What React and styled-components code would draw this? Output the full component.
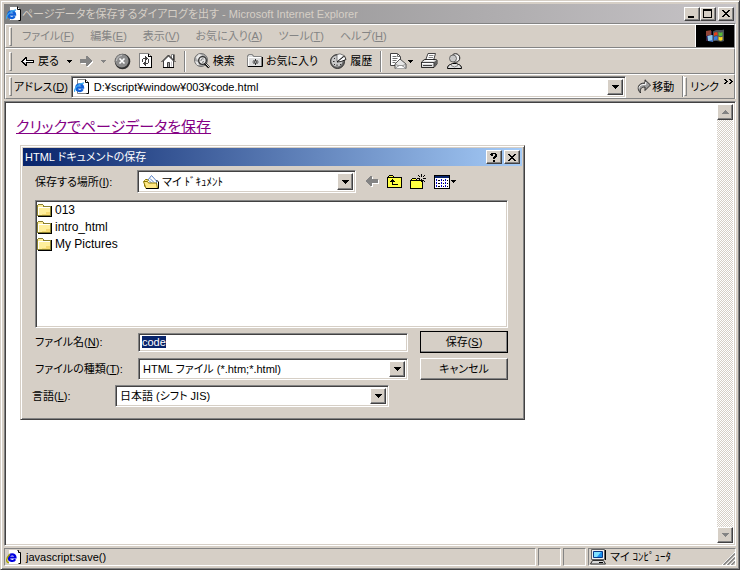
import React, { useEffect, useRef } from "react";
import styled, { createGlobalStyle, css } from "styled-components";

const FACE = "#d6cfc6";
const SHADOW = "#848484";
const DARK = "#424142";

const GlobalStyle = createGlobalStyle`
  * {
    box-sizing: border-box;
  }

  body {
    margin: 0;
    background: ${FACE};
  }

  body,
  button,
  input,
  select {
    color: #000;
    font-family: "Liberation Sans", "Noto Sans CJK JP", sans-serif;
    font-size: 11px;
    line-height: 16px;
    font-feature-settings: "palt";
  }

  button,
  input,
  select {
    margin: 0;
    padding: 0;
    border: 0;
    border-radius: 0;
    outline: 0;
  }

  svg {
    display: block;
    flex: none;
  }
`;

const raised = css`
  background: ${FACE};
  border: 1px solid;
  border-color: #fff ${DARK} ${DARK} #fff;
  box-shadow: inset -1px -1px ${SHADOW};
`;

const sunken = css`
  background: #fff;
  border: 1px solid;
  border-color: ${SHADOW} #fff #fff ${SHADOW};
  box-shadow: inset 1px 1px ${DARK}, inset -1px -1px ${FACE};
`;

const Window = styled.div`
  display: flex;
  flex-direction: column;
  min-height: 100vh;
  padding: 3px;
  background: ${FACE};
  border: 1px solid;
  border-color: ${FACE} ${DARK} ${DARK} ${FACE};
  box-shadow: inset 1px 1px #fff, inset -1px -1px ${SHADOW};
`;

const TitleBar = styled.header`
  display: flex;
  align-items: center;
  height: ${(p) => (p.$active ? 18 : 19)}px;
  padding: 0 2px;
  color: ${(p) => (p.$active ? "#fff" : FACE)};
  background: ${(p) =>
    p.$active
      ? "linear-gradient(90deg, #08246b, #a5cbf7)"
      : "linear-gradient(90deg, #808080, #c6c3c6)"};
`;

const Title = styled.h1`
  flex: 1;
  margin: 0;
  font-size: 11px;
  font-weight: normal;
  white-space: nowrap;
  overflow: hidden;
`;

const CaptionButton = styled.button`
  ${raised}
  display: flex;
  align-items: center;
  justify-content: center;
  width: 16px;
  height: 14px;
  margin-left: ${(p) => (p.$gap ? 2 : 0)}px;
`;

const Rebar = styled.div`
  border-left: 1px solid ${SHADOW};
  border-top: 1px solid ${SHADOW};
  border-right: 1px solid #fff;
`;

const Band = styled.div`
  display: flex;
  align-items: center;
  height: ${(p) => p.$height}px;
  padding-left: 3px;
  border: 1px solid;
  border-color: #fff ${SHADOW} ${SHADOW} #fff;
`;

const Grip = styled.span`
  flex: none;
  width: 3px;
  height: 19px;
  border: 1px solid;
  border-color: #fff ${SHADOW} ${SHADOW} #fff;
`;

const Menu = styled.nav`
  display: flex;
  flex: 1;
  gap: 16px;
  padding-left: 10px;
`;

const MenuItem = styled.button`
  color: ${SHADOW};
  background: none;
  white-space: nowrap;
`;

const Throbber = styled.div`
  display: flex;
  align-items: center;
  justify-content: center;
  align-self: stretch;
  width: 39px;
  background: #000;
  border-left: 1px solid #fff;
`;

const Tools = styled.div`
  display: flex;
  align-items: center;
  gap: 8px;
  padding-left: 9px;
`;

const ToolButton = styled.button`
  display: flex;
  align-items: center;
  gap: ${(p) => p.$gap || 3}px;
  padding-right: ${(p) => (p.$labelled ? 4 : 0)}px;
  background: none;
  white-space: nowrap;
`;

const Separator = styled.span`
  width: 2px;
  height: 21px;
  border-left: 1px solid ${SHADOW};
  border-right: 1px solid #fff;
`;

const Field = styled.div`
  ${sunken}
  display: flex;
  align-items: center;
  flex: ${(p) => (p.$width ? "none" : 1)};
  width: ${(p) => (p.$width ? p.$width + "px" : "auto")};
  height: ${(p) => p.$height || 22}px;
  padding: ${(p) => (p.$icon ? "2px 2px 2px 5px" : "2px")};
  min-width: 0;
`;

const TextInput = styled.input`
  flex: 1;
  min-width: 0;
  height: 100%;
  padding-left: ${(p) => p.$indent || 0}px;
  background: transparent;

  &::selection {
    color: #fff;
    background: #08246b;
  }
`;

const Picker = styled.select`
  appearance: none;
  flex: 1;
  min-width: 0;
  height: 100%;
  padding-left: 2px;
  background: transparent;
`;

const DropArrow = styled.span`
  ${raised}
  display: flex;
  align-items: center;
  justify-content: center;
  align-self: stretch;
  flex: none;
  width: 16px;
`;

const AddressLabel = styled.label`
  margin: 0 3px 0 2px;
  white-space: nowrap;
`;

const GoButton = styled(ToolButton)`
  gap: 1px;
  padding: 0 8px 0 11px;
`;

const Links = styled.button`
  display: flex;
  gap: 5px;
  padding: 0 1px 0 3px;
  background: none;
  white-space: nowrap;
`;

const Viewport = styled.main`
  ${sunken}
  display: flex;
  flex: 1;
  margin-top: 2px;
  padding: 2px;
`;

const Page = styled.div`
  position: relative;
  flex: 1;
  padding: 13px 9px;
`;

const PageLink = styled.a`
  color: #840084;
  font-size: 15px;
  line-height: 20px;
`;

const Scrollbar = styled.div`
  display: flex;
  flex-direction: column;
  justify-content: space-between;
  width: 16px;
  background: repeating-conic-gradient(#fff 0 25%, ${FACE} 0 50%) 0 0 / 2px 2px;
`;

const ScrollButton = styled.button`
  ${raised}
  display: flex;
  align-items: center;
  justify-content: center;
  height: 16px;
`;

const StatusBar = styled.footer`
  display: flex;
  gap: 2px;
  height: 18px;
  margin-top: 2px;
`;

const StatusPane = styled.div`
  display: flex;
  align-items: center;
  gap: 4px;
  flex: ${(p) => (p.$width ? "none" : 1)};
  width: ${(p) => (p.$width ? p.$width + "px" : "auto")};
  padding-left: 1px;
  border: 1px solid;
  border-color: ${SHADOW} #fff #fff ${SHADOW};
  white-space: nowrap;
`;

const Resize = styled.span`
  align-self: flex-end;
  margin-left: auto;
`;

const Dialog = styled.section`
  position: absolute;
  left: 13px;
  top: 41px;
  width: 505px;
  padding: 2px;
  background: ${FACE};
  border: 1px solid;
  border-color: ${FACE} ${DARK} ${DARK} ${FACE};
  box-shadow: inset 1px 1px #fff, inset -1px -1px ${SHADOW};
`;

const DialogBody = styled.form`
  padding: 4px 14px 10px 12px;
`;

const LookIn = styled.div`
  display: flex;
  align-items: center;
  height: 23px;
  margin-bottom: 7px;
`;

const LookInLabel = styled.label`
  width: 102px;
`;

const FolderTools = styled.div`
  display: flex;
  align-items: center;
  gap: 8px;
  padding-left: 10px;
`;

const FileList = styled.ul`
  ${sunken}
  height: 128px;
  margin: 0;
  padding: 0 1px;
  font-size: 12px;
  list-style: none;
`;

const FileItem = styled.li`
  display: flex;
  align-items: center;
  gap: 2px;
  height: 17px;
`;

const FormRows = styled.div`
  display: grid;
  grid-template-columns: 103px 270px 1fr;
  row-gap: 5px;
  align-items: center;
  padding-top: 3px;
`;

const PushButton = styled.button`
  ${raised}
  justify-self: end;
  width: 88px;
  height: 22px;
  outline: ${(p) => (p.$primary ? "1px solid #000" : "0")};
  outline-offset: -1px;
`;

const LanguageRow = styled.div`
  display: flex;
  align-items: center;
  margin: 5px 0 0 -3px;
`;

const LanguageLabel = styled.label`
  width: 83px;
`;

const Key = ({ k }) => (
  <>
    (<u>{k}</u>)
  </>
);

const Triangle = ({ color = "#000", up, small }) => (
  <svg width={small ? 5 : 7} height={small ? 3 : 4} viewBox={small ? "1 1 5 3" : "0 0 7 4"} shapeRendering="crispEdges">
    <path fill={color} d={up ? "M3 0h1v1h1v1h1v1h1v1H0V3h1V2h1V1h1z" : "M0 0h7v1H6v1H5v1H4v1H3V3H2V2H1V1H0z"} />
  </svg>
);

const PageIcon = () => (
  <svg width="16" height="16" viewBox="0 0 16 16">
    <path fill="#fff" stroke="#848484" d="M3.500 .5h8l3 3v11h-11z" />
    <path fill="none" stroke="#000" d="M11.500 .5v3h3v11h-2" />
    <path fill="none" stroke="#1060d8" strokeWidth="2.400" d="M2.500 8.500h6.500c0-4.300-6.600-4.200-6.600.2 0 3.800 5 4.200 6.300 1.600" />
    <path fill="none" stroke="#38a8f0" strokeWidth="1.200" d="M.8 12.800C-.5 10.500 4 4.500 10 3.800" />
  </svg>
);

const StatusPageIcon = () => (
  <svg width="16" height="16" viewBox="0 0 16 16">
    <path fill="#fff" d="M3 1h8l3 3v11H3z" />
    <path fill="none" stroke="#000" d="M11.500 1.500h1v2h2v11h-2" />
    <path fill="none" stroke="#0000e0" strokeWidth="2.200" d="M3 8.500h6.500c0-4.300-6.600-4.200-6.600.2 0 3.800 5 4.200 6.300 1.600" />
    <path fill="none" stroke="#a5a200" strokeWidth="1.300" d="M3 13.500C-.5 13.500 0 9 4 5" />
  </svg>
);

const BackIcon = () => (
  <svg width="13" height="9" viewBox="0 0 13 9" shapeRendering="crispEdges">
    <path fill="#000" d="M4 0h2v3h7v3H6v3H4V8H3V7H2V6H1V5H0V4h1V3h1V2h1V1h1z" />
    <path fill="#fff" d="M4 2h1v2h7v1H2V4h1V3h1z" />
    <path fill="#c6c3c6" d="M3 5h2v2H4V6H3z" />
  </svg>
);

const GreyArrow = ({ left }) => (
  <svg width="13" height="11" viewBox="0 0 13 11" shapeRendering="crispEdges">
    {left ? (
      <>
        <path fill="#fff" d="M5 1h2v3h6v4H7v3H5v-1H4V9H3V8H2V7H1V5h1V4h1V3h1V2h1z" />
        <path fill="#848484" d="M4 0h2v3h6v4H6v3H4V9H3V8H2V7H1V6H0V4h1V3h1V2h1V1h1z" />
      </>
    ) : (
      <>
        <path fill="#fff" d="M7 1h2v1h1v1h1v1h1v1h1v2h-1v1h-1v1h-1v1H9v1H7V8H1V4h6z" />
        <path fill="#848484" d="M6 0h2v1h1v1h1v1h1v1h1v2h-1v1h-1v1H9v1H8v1H6V7H0V3h6z" />
      </>
    )}
  </svg>
);

const StopIcon = () => (
  <svg width="17" height="17" viewBox="0 0 17 17">
    <circle cx="8.500" cy="8.500" r="7.800" fill="#303030" />
    <circle cx="7.800" cy="7.800" r="6.800" fill="#8c8c8c" />
    <path fill="none" stroke="#c8c8c8" d="M2.500 8a5.500 5.500 0 0 1 5.500-5.500" />
    <path stroke="#fff" strokeWidth="1.600" d="M5.500 5.500l5 5M10.500 5.500l-5 5" />
  </svg>
);

const RefreshIcon = () => (
  <svg width="14" height="16" viewBox="0 0 14 16" shapeRendering="crispEdges">
    <path fill="#fff" stroke="#848484" d="M.5 .5h9l3 3v11H.5z" />
    <path fill="none" stroke="#000" d="M9.500 .5v3h3M12.500 3.500v11.500M1 14.500h12" />
    <path fill="#424142" d="M6 3h1v1h1v1h1v1H8v1H7v1H6V6H4v3H3V6h1V5h2zM9 6h1v4H9v1H7v2H6v-1H5v-1H4v-1h1V9h1V8h1v2h2z" />
  </svg>
);

const HomeIcon = () => (
  <svg width="15" height="16" viewBox="0 0 15 16">
    <path fill="#fff" stroke="#848484" d="M10.500 5V1.500h2v5.500" />
    <path fill="#fff" stroke="#424142" d="M2.500 8v6.500h10V8L7.500 3z" />
    <path fill="none" stroke="#202020" d="M.5 9L7.500 2l7 7" />
    <path fill="#a8a8a8" stroke="#424142" d="M6.500 9.500h2v5h-2z" />
    <path stroke="#c6c3c6" d="M10.500 8.500v5" />
    <path fill="none" stroke="#000" d="M13 1.500V7M2 14.500h11" />
  </svg>
);

const SearchIcon = () => (
  <svg width="16" height="16" viewBox="0 0 16 16">
    <circle cx="7" cy="7" r="6.500" fill="#a8a8a8" stroke="#707070" />
    <path fill="#e8e8e8" d="M2 4l3-3 3 1-2 3-3 2zM1 8l3 1 1 3-2 0z" />
    <circle cx="8.500" cy="7.500" r="3.800" fill="#e4e4e4" stroke="#303030" strokeWidth="1.300" />
    <path fill="none" stroke="#707070" d="M7 8a1.800 1.800 0 0 1 2.500-2M8 9.500l2-1" />
    <path stroke="#000" strokeWidth="2.400" d="M11 10.500l4 4" />
    <path stroke="#d8d8d8" d="M11.500 10.500l3.500 3.500" />
  </svg>
);

const FavoritesIcon = () => (
  <svg width="16" height="14" viewBox="0 0 16 14">
    <path fill="#dedede" stroke="#848484" d="M.5 3.500v-2h1v-1h4v1h1v1h8v10H.5z" />
    <path fill="none" stroke="#000" d="M1 12.500h14.500V3" />
    <path fill="none" stroke="#fff" d="M1.500 12V3.500H14" />
    <path stroke="#303030" d="M8.500 5v6M5.500 8h6M6.500 6l4 4M10.500 6l-4 4" />
    <path fill="#fff" d="M8 7.500h1v1H8z" />
  </svg>
);

const HistoryIcon = () => (
  <svg width="17" height="16" viewBox="0 0 17 16">
    <circle cx="7.500" cy="8.500" r="7" fill="#686868" stroke="#303030" />
    <circle cx="7" cy="8" r="5.600" fill="#c8c8c8" />
    <path fill="#f8f8f8" stroke="#606060" strokeWidth=".8" d="M7 8.500V1.500l3-.7 4 1.700-3 3z" />
    <path fill="#fff" stroke="#000" strokeWidth=".8" d="M7 9l7.500-6 1.500 3.500-5 2z" />
    <path stroke="#303030" d="M3 8.500h1.500M7 11.500v1.500M4 5l1 1M10 11l1 1M4 12l1-1" />
  </svg>
);

const MailIcon = () => (
  <svg width="17" height="17" viewBox="0 0 17 17">
    <path fill="#fff" stroke="#424142" d="M.5 .5h7l3 3v9H.5z" />
    <path fill="none" stroke="#707070" d="M2.500 3.500h4M2.500 5.500h5M2.500 7.500h4M2.500 9.500h3M7.500 .5v3h3" />
    <path fill="#e6e6e6" stroke="#303030" strokeWidth=".8" d="M5 11l5-5 6 5v4.500H5z" />
    <path fill="#fff" stroke="#808080" strokeWidth=".8" d="M5 15.500l4-3h3l4 3" />
    <path fill="none" stroke="#808080" strokeWidth=".8" d="M5 11l4 2M16 11l-4 2" />
  </svg>
);

const PrintIcon = () => (
  <svg width="17" height="16" viewBox="0 0 17 16">
    <path fill="#fff" stroke="#424142" d="M4.500 7.500L7 .5h7.500l-2 7z" />
    <path stroke="#848484" d="M8 2.500h4.500M7.500 4.500h4.500" />
    <path fill="#dedede" stroke="#000" strokeWidth=".8" d="M.5 9l3-2.500h10.500l2 .5v4L13 14.500H.5z" />
    <path fill="#606060" d="M13 9l3-2v4l-3 3z" />
    <path fill="none" stroke="#424142" d="M1 9.500h12v4.500M2 12.500h9" />
    <path stroke="#fff" d="M1 10.500h11" />
    <path fill="#fff" d="M5 7h8l-1 1H4z" />
  </svg>
);

const MessengerIcon = () => (
  <svg width="17" height="17" viewBox="0 0 17 17">
    <circle cx="9.500" cy="5" r="4.300" fill="#efefef" stroke="#202020" />
    <circle cx="7" cy="5.500" r="3.500" fill="#c8c8c8" stroke="#505050" strokeWidth=".8" />
    <path fill="#e0e0e0" stroke="#000" d="M1.500 15.500c0-2 .8-3.500 3-4l2-1h4l2 1c2.200.5 3 2 3 4z" />
    <path fill="none" stroke="#848484" d="M5 12.500l3.500 1.500 3.500-1.500" />
  </svg>
);

const GoIcon = () => (
  <svg width="14" height="15" viewBox="0 0 14 15">
    <path fill="#9c9c9c" stroke="#202020" strokeWidth=".9" d="M3.500 14C-.5 10 .5 4 8 4V.8L13.500 6 8 11.500V8C4 8 3 10 3.500 14z" />
    <path fill="none" stroke="#fff" d="M2 9.500C2 6.500 4.500 5.300 8.700 5.500V3" />
  </svg>
);

const FlagLogo = () => (
  <svg width="20" height="17" viewBox="0 0 20 17">
    <path fill="#402048" d="M1 3h6v10H1z" opacity=".8" />
    <path fill="#b85838" d="M1 3l5-1v5l-5 1z" opacity=".7" />
    <path fill="#4878c8" d="M2 8l6-1v7l-5-1z" />
    <path fill="#90c8e8" d="M3 8l4-1v5l-4 1z" />
    <path fill="#485058" d="M8 3.500C12 .5 14 3 19 1.500V13c-4 2-7-1-11 .5z" />
    <path fill="#e84018" d="M9 5C10 4 11 4 12.500 4.500v3C11 7 10 7 9 8z" />
    <path fill="#58b838" d="M13.500 4c2 1 2.500 1 4 0v3.500c-1.500 1-2 1-4 0z" />
    <path fill="#3878e0" d="M9 9c1-1 2-1 3.500-.5V12C11 11.500 10 12 9 12.500z" />
    <path fill="#f8d820" d="M13.500 8.500c2 1 2.500 1 4 0V12c-1.500 1-2 1-4 0z" />
  </svg>
);

const DocumentsIcon = () => (
  <svg width="17" height="16" viewBox="0 0 17 16">
    <path fill="#fff" stroke="#5a82c8" d="M3.500 8l5-6.500 5 5.500v4h-10z" />
    <path stroke="#5a82c8" d="M7 4.500l4 4M6 6.500l3 3" />
    <path fill="#ffe784" stroke="#8c7900" d="M1.500 12.500v-6l1-1h2l1 1.500" />
    <path fill="#ffe784" stroke="#8c7900" d="M.5 7.500h4l1 1.500h8l1 5.500H3z" />
    <path fill="none" stroke="#000" d="M3 14.500h12.500V8l-2-2" />
  </svg>
);

const FolderIcon = () => (
  <svg width="16" height="14" viewBox="0 0 16 14" shapeRendering="crispEdges">
    <path fill="#ffef9c" stroke="#8c8230" d="M.5 12.500v-10l1-1h4l1 1.500h7v9.500z" />
    <path fill="#fff" d="M1 4h12v1H2v7H1z" />
    <path fill="#f7db73" d="M9 9h4v3H5v-1h4z" />
    <path fill="none" stroke="#000" d="M1 13.500h13.500V3" />
  </svg>
);

const UpIcon = () => (
  <svg width="15" height="13" viewBox="0 0 15 13" shapeRendering="crispEdges">
    <path fill="#000" d="M2 0h4v1h1v1h8v11H0V2h1V1h1z" />
    <path fill="#ffff42" d="M2 1h4v1H2zM1 3h13v9H1z" />
    <path fill="#000" d="M5 4h1v1h1v1h1v1H6v2h5v1H5V7H3V6h1V5h1z" />
  </svg>
);

const NewFolderIcon = () => (
  <svg width="16" height="15" viewBox="0 0 16 15" shapeRendering="crispEdges">
    <path fill="#000" d="M2 4h4v1h1v1h6v9H0V6h1V5h1z" />
    <path fill="#ffff42" d="M2 5h4v1H2zM1 7h11v7H1z" />
    <path fill="#000" d="M11 0h1v3h-1zM11 5h1v3h-1zM7 4h3v1H7zM13 4h3v1h-3zM8 1h1v1H8zM9 2h1v1H9zM14 1h1v1h-1zM13 2h1v1h-1zM13 6h1v1h-1zM14 7h1v1h-1zM9 5h1v1H9z" />
  </svg>
);

const ViewIcon = () => (
  <svg width="16" height="14" viewBox="0 0 16 14" shapeRendering="crispEdges">
    <path fill="#000" d="M0 0h16v14H0z" />
    <path fill="#fff" d="M1 3h14v10H1z" />
    <path fill="#08246b" d="M1 1h14v2H1z" />
    <path fill="#0000c6" d="M2 4h1v2H2zM7 4h1v2H7zM11 4h1v2h-1zM2 7h1v2H2zM7 7h1v2H7zM11 7h1v2h-1zM2 10h1v2H2zM7 10h1v2H7zM11 10h1v2h-1z" />
    <path fill="#000" d="M4 5h2v1H4zM9 5h1v1H9zM13 5h1v1h-1zM4 8h2v1H4zM9 8h1v1H9zM13 8h1v1h-1zM4 11h2v1H4zM9 11h1v1H9zM13 11h1v1h-1z" />
  </svg>
);

const ComputerIcon = () => (
  <svg width="16" height="16" viewBox="0 0 16 16">
    <path fill="#f0f0f0" stroke="#606060" d="M1.500 .5h13v10h-13z" />
    <path fill="#1890f0" stroke="#083888" d="M3.500 2.500h9v6h-9z" />
    <path fill="#80e0ff" d="M4 3h7L7 8H4z" />
    <path fill="#d8d8d8" stroke="#303030" d="M2.500 11.500h11l2 3.500H.5z" />
    <path stroke="#000" d="M9 13.500h4M15.500 1v10" />
  </svg>
);

const CaptionGlyph = ({ d }) => (
  <svg width="10" height="9" viewBox="0 0 10 9" shapeRendering="crispEdges">
    <path d={d} />
  </svg>
);

const CLOSE = "M1 1h2v1h1v1h2V2h1V1h2v1H8v1H7v1H6v1h1v1h1v1h1v1H7V7H6V6H4v1H3v1H1V7h1V6h1V5h1V4H3V3H2V2H1z";
const MINIMIZE = "M1 7h6v2H1z";
const MAXIMIZE = "M0 0h9v9H0zM1 2v6h7V2z";
const HELP = "M2 0h5v1h1v3H7v1H6v1H4V4h1V3h1V1H4v2H2V2H1V1h1zM4 7h2v2H4z";

const folders = ["013", "intro_html", "My Pictures"];

const SaveDialog = () => {
  const nameRef = useRef(null);

  useEffect(() => {
    nameRef.current.focus();
    nameRef.current.select();
  }, []);

  return (
    <Dialog role="dialog" aria-label="HTML ドキュメントの保存">
      <TitleBar $active>
        <Title as="h2">HTML ドキュメントの保存</Title>
        <CaptionButton aria-label="ヘルプ">
          <CaptionGlyph d={HELP} />
        </CaptionButton>
        <CaptionButton $gap aria-label="閉じる">
          <CaptionGlyph d={CLOSE} />
        </CaptionButton>
      </TitleBar>
      <DialogBody onSubmit={(e) => e.preventDefault()}>
        <LookIn>
          <LookInLabel htmlFor="place">
            保存する場所
            <Key k="I" />:
          </LookInLabel>
          <Field $width={219} $height={23} $icon>
            <DocumentsIcon />
            <Picker id="place">
              <option>マイ ﾄﾞｷｭﾒﾝﾄ</option>
            </Picker>
            <DropArrow>
              <Triangle />
            </DropArrow>
          </Field>
          <FolderTools>
            <ToolButton type="button" aria-label="戻る">
              <GreyArrow left />
            </ToolButton>
            <ToolButton type="button" aria-label="上へ">
              <UpIcon />
            </ToolButton>
            <ToolButton type="button" aria-label="新しいフォルダ">
              <NewFolderIcon />
            </ToolButton>
            <ToolButton type="button" aria-label="表示" $gap={1}>
              <ViewIcon />
              <Triangle small />
            </ToolButton>
          </FolderTools>
        </LookIn>
        <FileList>
          {folders.map((name) => (
            <FileItem key={name}>
              <FolderIcon />
              {name}
            </FileItem>
          ))}
        </FileList>
        <FormRows>
          <label htmlFor="filename">
            ファイル名
            <Key k="N" />:
          </label>
          <Field $height={19}>
            <TextInput id="filename" ref={nameRef} $indent={1} defaultValue="code" />
          </Field>
          <PushButton $primary type="submit">
            保存
            <Key k="S" />
          </PushButton>
          <label htmlFor="filetype">
            ファイルの種類
            <Key k="T" />:
          </label>
          <Field>
            <Picker id="filetype">
              <option>HTML ファイル (*.htm;*.html)</option>
            </Picker>
            <DropArrow>
              <Triangle />
            </DropArrow>
          </Field>
          <PushButton type="button">キャンセル</PushButton>
        </FormRows>
        <LanguageRow>
          <LanguageLabel htmlFor="language">
            言語
            <Key k="L" />:
          </LanguageLabel>
          <Field $width={274}>
            <Picker id="language">
              <option>日本語 (シフト JIS)</option>
            </Picker>
            <DropArrow>
              <Triangle />
            </DropArrow>
          </Field>
        </LanguageRow>
      </DialogBody>
    </Dialog>
  );
};

const menus = [
  ["ファイル", "F"],
  ["編集", "E"],
  ["表示", "V"],
  ["お気に入り", "A"],
  ["ツール", "T"],
  ["ヘルプ", "H"],
];

const App = () => {
  return (
    <>
      <GlobalStyle />
      <Window>
        <TitleBar>
          <PageIcon />
          <Title>ページデータを保存するダイアログを出す - Microsoft Internet Explorer</Title>
          <CaptionButton aria-label="最小化">
            <CaptionGlyph d={MINIMIZE} />
          </CaptionButton>
          <CaptionButton aria-label="最大化">
            <CaptionGlyph d={MAXIMIZE} />
          </CaptionButton>
          <CaptionButton $gap aria-label="閉じる">
            <CaptionGlyph d={CLOSE} />
          </CaptionButton>
        </TitleBar>
        <Rebar>
          <Band $height={24}>
            <Grip />
            <Menu>
              {menus.map(([label, k]) => (
                <MenuItem key={k}>
                  {label}
                  <Key k={k} />
                </MenuItem>
              ))}
            </Menu>
            <Throbber>
              <FlagLogo />
            </Throbber>
          </Band>
          <Band $height={26}>
            <Grip />
            <Tools>
              <ToolButton $gap={4}>
                <BackIcon />
                戻る
              </ToolButton>
              <Triangle small />
              <ToolButton aria-label="進む">
                <GreyArrow />
              </ToolButton>
              <Triangle small color={SHADOW} />
              <ToolButton aria-label="中止">
                <StopIcon />
              </ToolButton>
              <ToolButton aria-label="更新">
                <RefreshIcon />
              </ToolButton>
              <ToolButton aria-label="ホーム">
                <HomeIcon />
              </ToolButton>
              <Separator />
              <ToolButton $labelled>
                <SearchIcon />
                検索
              </ToolButton>
              <ToolButton $labelled>
                <FavoritesIcon />
                お気に入り
              </ToolButton>
              <ToolButton>
                <HistoryIcon />
                履歴
              </ToolButton>
              <Separator />
              <ToolButton aria-label="メール" $gap={1}>
                <MailIcon />
                <Triangle small />
              </ToolButton>
              <ToolButton aria-label="印刷">
                <PrintIcon />
              </ToolButton>
              <ToolButton aria-label="Messenger">
                <MessengerIcon />
              </ToolButton>
            </Tools>
          </Band>
          <Band $height={25}>
            <Grip />
            <AddressLabel htmlFor="address">
              アドレス
              <Key k="D" />
            </AddressLabel>
            <Field>
              <PageIcon />
              <TextInput id="address" $indent={4} defaultValue="D:¥script¥window¥003¥code.html" />
              <DropArrow>
                <Triangle />
              </DropArrow>
            </Field>
            <GoButton>
              <GoIcon />
              移動
            </GoButton>
            <Separator />
            <Grip />
            <Links>
              <span>リンク</span>
              <svg width="9" height="7" viewBox="0 0 9 7" shapeRendering="crispEdges">
                <path d="M0 0h2v1h1v1h1v1H3v1H2v1H0V4h1V3h1V2H1V1H0zM5 0h2v1h1v1h1v1H8v1H7v1H5V4h1V3h1V2H6V1H5z" />
              </svg>
            </Links>
          </Band>
        </Rebar>
        <Viewport>
          <Page>
            <PageLink href="#save">クリックでページデータを保存</PageLink>
            <SaveDialog />
          </Page>
          <Scrollbar>
            <ScrollButton aria-label="上にスクロール">
              <Triangle up color={SHADOW} />
            </ScrollButton>
            <ScrollButton aria-label="下にスクロール">
              <Triangle color={SHADOW} />
            </ScrollButton>
          </Scrollbar>
        </Viewport>
        <StatusBar>
          <StatusPane>
            <StatusPageIcon />
            javascript:save()
          </StatusPane>
          <StatusPane $width={23} />
          <StatusPane $width={23} />
          <StatusPane $width={148}>
            <ComputerIcon />
            マイ ｺﾝﾋﾟｭｰﾀ
            <Resize>
              <svg width="13" height="13" viewBox="0 0 13 13">
                <path stroke="#fff" d="M0 13L13 0M4 13l9-9M8 13l5-5" />
                <path stroke="#848484" strokeWidth="1.500" d="M1.500 13L13 1.500M5.500 13L13 5.500M9.500 13L13 9.500" />
              </svg>
            </Resize>
          </StatusPane>
        </StatusBar>
      </Window>
    </>
  );
};

export default App;
